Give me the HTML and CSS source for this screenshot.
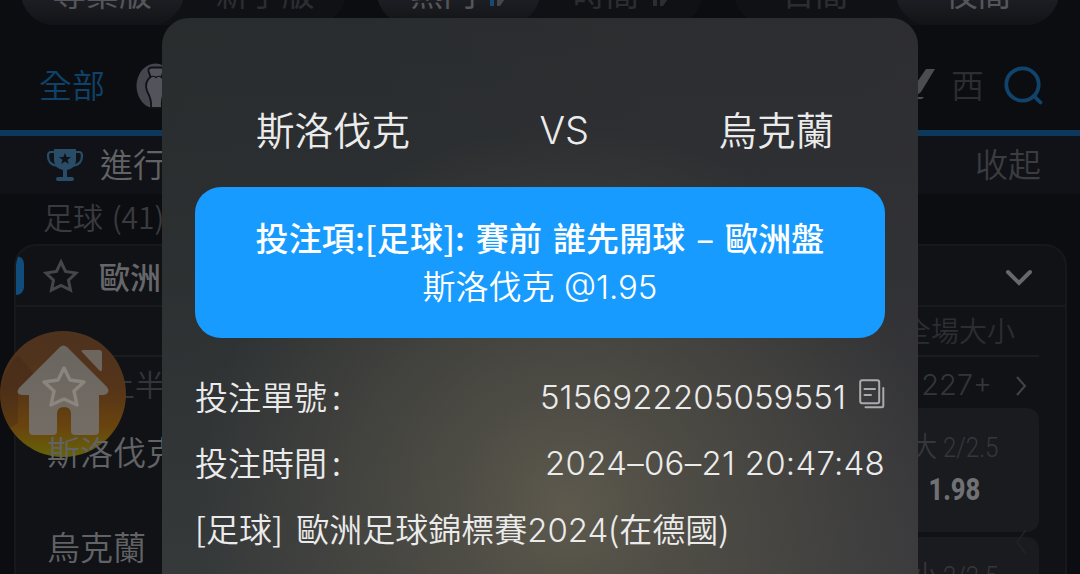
FILE: index.html
```html
<!DOCTYPE html>
<html lang="zh-Hant">

<head>
	<meta charset="utf-8">
	<title>投注單</title>
	<link rel="stylesheet" href="styles.css">
</head>

<body>

	<div class="page">
		<div class="tabs">
			<div class="tab-group">
				<span class="tab active">專業版</span>
				<span class="tab">新手版</span>
			</div>
			<div class="tab-group">
				<span class="tab active">熱門
					<svg class="sort" viewBox="0 0 22 28"><path d="M7 28V4L1 12" stroke="#174a75"/><path d="M14 2V26L21 16" stroke="#45464a"/></svg>
				</span>
				<span class="tab">時間
					<svg class="sort" viewBox="0 0 22 28"><path d="M7 28V4L1 12" stroke="#2c2d31"/><path d="M14 2V26L21 16" stroke="#2c2d31"/></svg>
				</span>
			</div>
			<div class="tab-group">
				<span class="tab">日間</span>
				<span class="tab active">夜間</span>
			</div>
		</div>

		<div class="nav">
			<span class="nav-all">全部</span>
			<svg class="euro" viewBox="0 0 40 46">
				<ellipse cx="19.5" cy="23" rx="19" ry="22.5" fill="#45464d"/>
				<path d="M12.5 8Q12 4.500 16 4.500H25Q28 5 27.500 8L25.500 14Q31 19 29 26Q25 36 26 45H15Q16 37 11 28Q8 19 14.500 14Z" fill="#53535b" stroke="#111217" stroke-width="1.8"/>
				<path d="M14 14.500Q17 12 20 14.500Q23 12 26 14.500" fill="none" stroke="#111217" stroke-width="1.2"/>
			</svg>
			<svg class="slash" viewBox="0 0 30 32"><path d="M21 1H30L16 24L8 30V20ZM8 29H19L17 31H8Z" fill="#4b4b50"/></svg>
			<span class="nav-west">西</span>
			<svg class="search" viewBox="0 0 40 40"><circle cx="18.5" cy="18.5" r="16.2"/><path d="M30 30L36.5 36.5"/></svg>
		</div>

		<div class="live">
			<svg class="trophy" viewBox="0 0 38 34">
				<path d="M9 4H5Q2 4 2 8Q2 17 12 18M29 4H33Q36 4 36 8Q36 17 26 18" fill="none" stroke="#294c67" stroke-width="2.2"/>
				<path d="M8 1H30V12Q30 20 21 22V29H26Q28 29 28 31T26 33H12Q10 33 10 31T12 29H17V22Q8 20 8 12Z" fill="#294c67"/>
				<path d="M19 5L20.6 9H25L21.5 11.8L22.8 16L19 13.5L15.2 16L16.5 11.8L13 9H17.4Z" fill="#111217"/>
			</svg>
			<span class="live-title">進行中</span>
			<span class="live-fold">收起</span>
		</div>

		<div class="sport">足球 (41)</div>

		<div class="league">
			<div class="league-head">
				<i class="mark"></i>
				<svg class="star" viewBox="0 0 36 34"><path d="M18 3L22.5 12.5L33 14L25.5 21.3L27.5 31L18 26.5L8.5 31L10.5 21.3L3 14L13.5 12.5Z"/></svg>
				<span class="league-name">歐洲足球</span>
				<svg class="down" viewBox="0 0 28 18"><path d="M3 3L14 14L25 3"/></svg>
			</div>
			<div class="columns">全場大小</div>
			<div class="period">
				<span>上半</span>
				<span class="more">227+</span>
				<svg class="next" viewBox="0 0 12 22"><path d="M2 2L10 11L2 20"/></svg>
			</div>
			<div class="match">
				<div class="teams">
					<span>斯洛伐克</span>
					<span>烏克蘭</span>
				</div>
				<div class="odds-list">
					<div class="odds"><span>大 2/2.5</span><b>1.98</b></div>
					<div class="odds"><span>小 2/2.5</span></div>
				</div>
			</div>
		</div>
	</div>

	<svg class="back" viewBox="0 0 12 26"><path d="M11 1L2 13L11 25"/></svg>

	<svg class="home" viewBox="0 0 126 126">
		<defs>
			<linearGradient id="amber" x1="0" y1="0" x2="0" y2="1">
				<stop offset="0" stop-color="#4d321e"/>
				<stop offset=".45" stop-color="#55341a"/>
				<stop offset=".75" stop-color="#69430e"/>
				<stop offset="1" stop-color="#656309"/>
			</linearGradient>
			<linearGradient id="stone" x1="0" y1="0" x2="0" y2="1">
				<stop offset="0" stop-color="#69655f"/>
				<stop offset="1" stop-color="#746d65"/>
			</linearGradient>
		</defs>
		<circle cx="63" cy="63" r="63" fill="url(#amber)"/>
		<path d="M0 63A63 63 0 0 1 18 24L35 44L18 61V92L10 97A63 63 0 0 1 0 63Z" fill="#3a2618" opacity=".3"/>
		<path d="M60 16Q63 13 67 16L107 56Q111 62 104 64H99V100Q99 104 95 104H75Q71 104 71 100V83Q71 76 64 76Q57 76 57 83V100Q57 104 53 104H33Q29 104 29 100V64H22Q15 63 19 57Z" fill="url(#stone)"/>
		<path d="M82 21Q80 19 84 19H99Q102 19 102 22V37Q102 43 98 38Z" fill="#6c665f"/>
		<path d="M64 37L70 49L84 51L74 60L77 74L64 68L51 74L54 60L44 51L58 49Z" fill="none" stroke="#8b857d" stroke-width="3.5" stroke-linejoin="round"/>
	</svg>

	<div class="modal">
		<div class="versus">
			<span>斯洛伐克</span>
			<span class="vs">VS</span>
			<span>烏克蘭</span>
		</div>
		<div class="bet">
			<div class="bet-title">投注項:[足球]: 賽前 誰先開球 – 歐洲盤</div>
			<div class="bet-pick">斯洛伐克 <span class="latin">@1.95</span></div>
		</div>
		<div class="info">
			<span class="label">投注單號<i class="colon">:</i></span>
			<span class="value">5156922205059551</span>
			<svg class="copy" viewBox="0 0 26 30"><rect x="1.2" y="1.2" width="19" height="23" rx="2"/><path d="M5.5 10H16M5.5 16H12M24.3 9V27Q24.3 28.3 23 28.3H6.5"/></svg>
		</div>
		<div class="info">
			<span class="label">投注時間<i class="colon">:</i></span>
			<span class="value date">2024–06–21 20:47:48</span>
		</div>
		<div class="info">
			<span class="label event">[足球] 歐洲足球錦標賽<span class="latin">2024</span>(在德國)</span>
		</div>
	</div>

</body>

</html>
```
FILE: styles.css
```css
* { box-sizing: border-box; }
body {
	margin: 0;
	height: 574px;
	overflow: hidden;
	background: #0c0d11;
	color: #626366;
	font-family: "Noto Sans CJK TC", sans-serif;
	font-size: 33px;
	font-weight: 350;
	white-space: nowrap;
}
svg { fill: none; flex: none; display: block; }
.page { height: 574px; overflow: hidden; }

/* top switches */
.tabs { display: flex; gap: 31px; height: 25px; padding: 0 21px; align-items: flex-end; }
.tab-group { display: flex; flex: 1; height: 66px; border-radius: 33px; background: #101115; }
.tab {
	flex: 1;
	display: flex;
	align-items: center;
	justify-content: center;
	gap: 9px;
	padding-bottom: 1px;
	border-radius: 33px;
	color: #2c2d31;
	font-weight: 400;
}
.tab.active { background: linear-gradient(#202126 50%, #121317); color: #55565a; }
.sort { width: 22px; height: 28px; stroke-width: 4; }

.nav { display: flex; align-items: center; height: 105px; padding: 16px 38px 0 39px; }
.nav span, .live span { margin-top: -4px; }
.nav .nav-all { color: #0f4268; }
.euro { width: 40px; height: 46px; margin-left: 31px; }
.slash { width: 30px; height: 32px; margin-left: 729px; margin-top: -3px; }
.nav .nav-west { margin-left: 16px; color: #2c2d31; }
.search { width: 40px; height: 40px; margin-left: 20px; stroke: #10446c; stroke-width: 3.8; stroke-linecap: round; }

.live {
	display: flex;
	align-items: center;
	height: 64px;
	padding: 0 39px 0 46px;
	border-top: 6px solid #0b385b;
	background: #111217;
}
.trophy { width: 38px; height: 34px; }
.live-title { margin-left: 16px; }
.live-fold { margin-left: auto; color: #3b3c40; }
.sport { height: 50px; padding-left: 43px; line-height: 45px; font-size: 30px; word-spacing: 2px; color: #393a3f; }

.league { height: 330px; overflow: hidden; margin: 0 13px 0 14px; border: 2px solid #17181c; border-bottom: 0; border-radius: 22px 22px 0 0; background: #111216; }
.league-head { display: flex; align-items: center; height: 61px; padding-right: 32px; border-bottom: 2px solid #191a1e; }
.mark { width: 8px; height: 39px; border-radius: 0 8px 8px 0; background: #104d7c; }
.star { width: 36px; height: 34px; margin-left: 19px; stroke: #45464a; stroke-width: 3; }
.league-name { margin-left: 20px; font-size: 31px; font-weight: 500; color: #66676a; }
.down { width: 28px; height: 18px; margin-left: auto; margin-top: 4px; stroke: #67686b; stroke-width: 4; stroke-linecap: round; }
.columns { height: 48px; padding-right: 50px; line-height: 46px; text-align: right; font-size: 28px; color: #2c2d31; }
.period {
	display: flex;
	align-items: center;
	height: 53px;
	margin: 0 26px 0 89px;
	border-top: 2px solid #1b1c20;
	color: #34353a;
	font-size: 30px;
}
.more { margin-left: auto; margin-top: 4px; font-family: Inter, "Noto Sans CJK TC", sans-serif; font-size: 29px; font-weight: 300; }
.next { width: 12px; height: 22px; margin-left: 23px; margin-right: 12px; margin-top: 6px; stroke: #424347; stroke-width: 2; }
.match { display: flex; justify-content: space-between; padding: 0 26px 0 31px; }
/* first team name stays readable over the home button */
.teams { position: relative; z-index: 1; display: flex; flex-direction: column; padding-top: 18px; gap: 45px; line-height: 50px; }
.odds-list { width: 172px; }
.odds {
	display: flex;
	flex-direction: column;
	align-items: center;
	height: 124px;
	margin-bottom: 5px;
	padding: 21px 0 0 6px;
	border-radius: 12px;
	background: #1a1b1f;
	font-family: Roboto, "Noto Sans CJK TC", sans-serif;
	font-size: 28px;
	line-height: 38px;
	color: #36373b;
}
.odds span { transform: scaleX(.86); }
.odds b { margin-top: 3px; margin-right: 4px; font-size: 32px; font-weight: 800; color: #707175; transform: scaleX(.8); }

/* floating home button and edge arrow over the list */
.home { position: absolute; left: 0; top: 331px; width: 126px; height: 126px; }
.back { position: absolute; left: 1014px; top: 529px; width: 14px; height: 26px; stroke: #222328; stroke-width: 1.5; }

.modal {
	position: absolute;
	z-index: 2;
	left: 162px;
	top: 18px;
	width: 756px;
	height: 556px;
	padding: 75px 33px 0;
	border-radius: 27px 27px 0 0;
	color: #ebebeb;
	background:
		radial-gradient(ellipse 370px 380px at 405px 490px, #5d594d 0%, rgba(88, 85, 73, .7) 30%, rgba(65, 65, 60, 0) 100%),
		linear-gradient(90deg, rgba(40, 46, 47, .5) 0%, rgba(50, 49, 54, .5) 100%),
		linear-gradient(#282a2c 0%, #303234 45%, #434445 100%);
}
.versus { display: flex; justify-content: space-between; height: 94px; padding: 5px 51px 0 61px; font-size: 38.5px; line-height: 60px; }
.vs { padding-top: 2px; font-family: Inter, sans-serif; font-size: 38px; font-weight: 350; }
.bet { height: 151px; padding-top: 26px; border-radius: 26px; background: #189bff; color: #fff; text-align: center; }
.bet-title { font-weight: 500; line-height: 48px; word-spacing: 3.2px; letter-spacing: .15px; }
.bet-pick { line-height: 48px; word-spacing: 2px; }
.latin { font-family: Inter, sans-serif; font-weight: 350; }
.info { display: flex; align-items: center; height: 66px; }
.bet + .info { margin-top: 26px; }
.label { margin-top: -2px; }
.colon { margin-left: 5px; font-style: normal; }
.value { margin-left: auto; font-family: Inter, sans-serif; font-weight: 350; letter-spacing: .1px; }
.date { letter-spacing: .25px; }
.event { word-spacing: 6px; }
.copy { width: 26px; height: 30px; margin-left: 13px; margin-top: -7px; stroke: #aaabaf; stroke-width: 2; stroke-linecap: round; }
```
